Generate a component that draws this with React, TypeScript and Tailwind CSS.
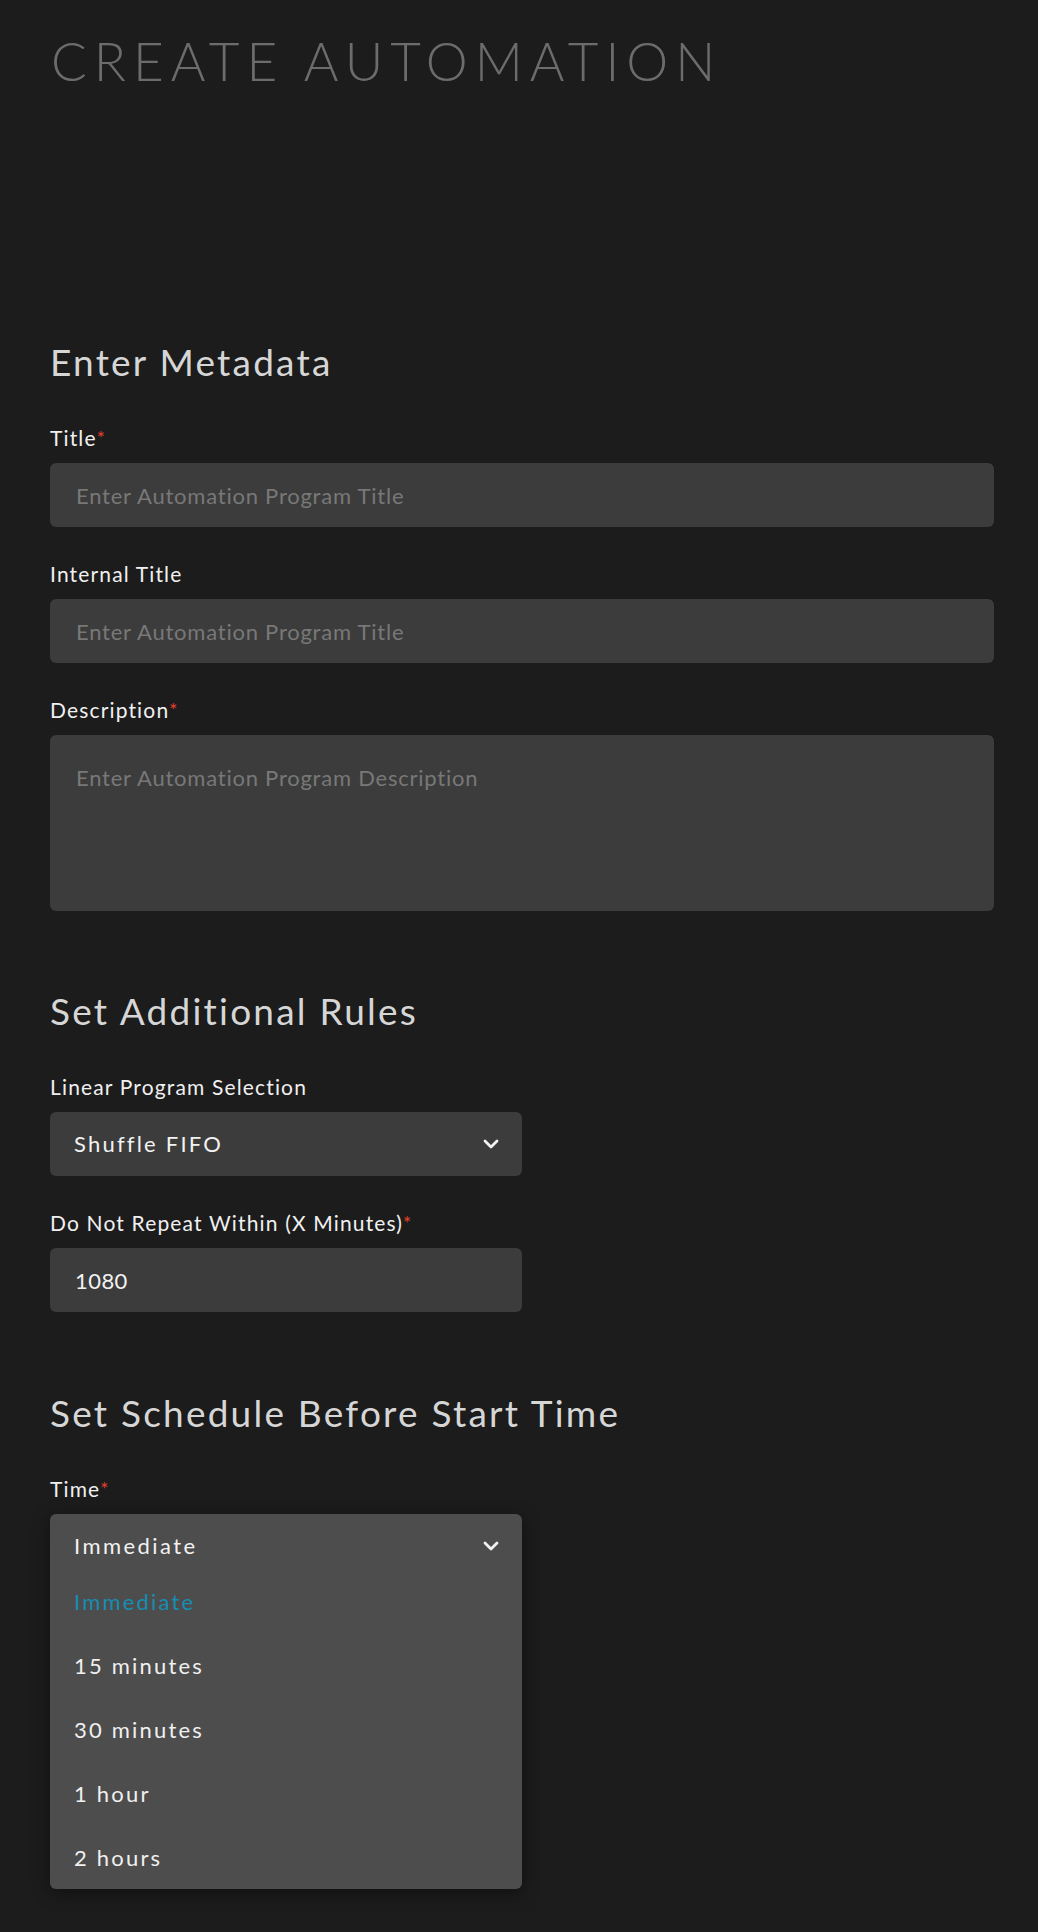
import { useState } from "react";

const timeOptions = ["Immediate", "15 minutes", "30 minutes", "1 hour", "2 hours"];

const Chevron = () => (
  <svg width="16" height="10" viewBox="0 0 16 10" fill="none" className="shrink-0">
    <polyline
      points="2,2 8,8 14,2"
      stroke="#f2f2f2"
      strokeWidth="2.8"
      strokeLinecap="round"
      strokeLinejoin="round"
    />
  </svg>
);

const Label = ({ text, required }: { text: string; required?: boolean }) => (
  <div className="text-[21px] leading-[24px] tracking-[0.055em] text-[#f0f0f0] mb-[13px]">
    {text}
    {required && <span className="text-[#e8402f] text-[19px] align-top">*</span>}
  </div>
);

const SectionTitle = ({ text }: { text: string }) => (
  <h2 className="text-[37px] leading-[37px] tracking-[0.06em] text-[#d6d6d6] mb-[46px]">{text}</h2>
);

const App = () => {
  const [time, setTime] = useState("Immediate");
  const [open, setOpen] = useState(true);

  return (
    <div
      className="min-h-screen bg-[#1c1c1c] pl-[50px] pt-[34px] pb-[60px]"
      style={{ fontFamily: "Lato, 'Open Sans', sans-serif" }}
    >
      <h1 className="text-[53px] leading-[53px] font-light tracking-[0.132em] text-[#6c6c6c] ml-[1px]">
        CREATE AUTOMATION
      </h1>

      <div className="w-[944px] mt-[256px]">
        <SectionTitle text="Enter Metadata" />
        <div className="flex flex-col gap-[35px]">
          <div>
            <Label text="Title" required />
            <input
              className="w-full h-16 rounded-md bg-[#3c3c3c] px-[26px] text-[22px] tracking-[0.035em] text-[#f2f2f2] placeholder:text-[#787878] outline-none"
              placeholder="Enter Automation Program Title"
            />
          </div>
          <div>
            <Label text="Internal Title" />
            <input
              className="w-full h-16 rounded-md bg-[#3c3c3c] px-[26px] text-[22px] tracking-[0.035em] text-[#f2f2f2] placeholder:text-[#787878] outline-none"
              placeholder="Enter Automation Program Title"
            />
          </div>
          <div>
            <Label text="Description" required />
            <textarea
              className="block w-full h-[176px] rounded-md bg-[#3c3c3c] px-[26px] pt-[26px] text-[22px] leading-[33px] tracking-[0.035em] text-[#f2f2f2] placeholder:text-[#787878] outline-none resize-none"
              placeholder="Enter Automation Program Description"
            />
          </div>
        </div>

        <div className="mt-[81px]">
          <SectionTitle text="Set Additional Rules" />
          <div className="flex flex-col gap-[35px] w-[472px]">
            <div>
              <Label text="Linear Program Selection" />
              <button className="w-full h-16 rounded-md bg-[#3c3c3c] pl-[24px] pr-[23px] flex items-center justify-between text-[22px] tracking-[0.1em] text-[#f2f2f2]">
                <span className="-mt-[2px]">Shuffle FIFO</span>
                <Chevron />
              </button>
            </div>
            <div>
              <Label text="Do Not Repeat Within (X Minutes)" required />
              <input
                className="w-full h-16 rounded-md bg-[#3c3c3c] px-[25px] text-[22px] tracking-[0.02em] text-[#f2f2f2] outline-none"
                defaultValue="1080"
              />
            </div>
          </div>
        </div>

        <div className="mt-[82px]">
          <SectionTitle text="Set Schedule Before Start Time" />
          <div className="w-[472px]">
            <Label text="Time" required />
            <div className="relative h-16">
              <div className="absolute left-0 top-0 w-full rounded-md bg-[#4d4d4d] shadow-[0_4px_18px_rgba(0,0,0,0.45)] z-10">
                <button
                  onClick={() => setOpen(!open)}
                  className="w-full h-16 pl-[24px] pr-[23px] flex items-center justify-between text-[22px] tracking-[0.11em] text-[#f2f2f2]"
                >
                  <span className="-mt-[2px]">{time}</span>
                  <Chevron />
                </button>
                {open && (
                  <ul className="-mt-[9px]">
                    {timeOptions.map((opt) => (
                      <li
                        key={opt}
                        onClick={() => setTime(opt)}
                        className={`h-16 pl-[24px] flex items-center text-[22px] tracking-[0.1em] cursor-pointer ${
                          opt === time ? "text-[#168db3]" : "text-[#f0f0f0]"
                        }`}
                      >
                        {opt}
                      </li>
                    ))}
                  </ul>
                )}
              </div>
            </div>
          </div>
        </div>
      </div>
    </div>
  );
};

export default App;
